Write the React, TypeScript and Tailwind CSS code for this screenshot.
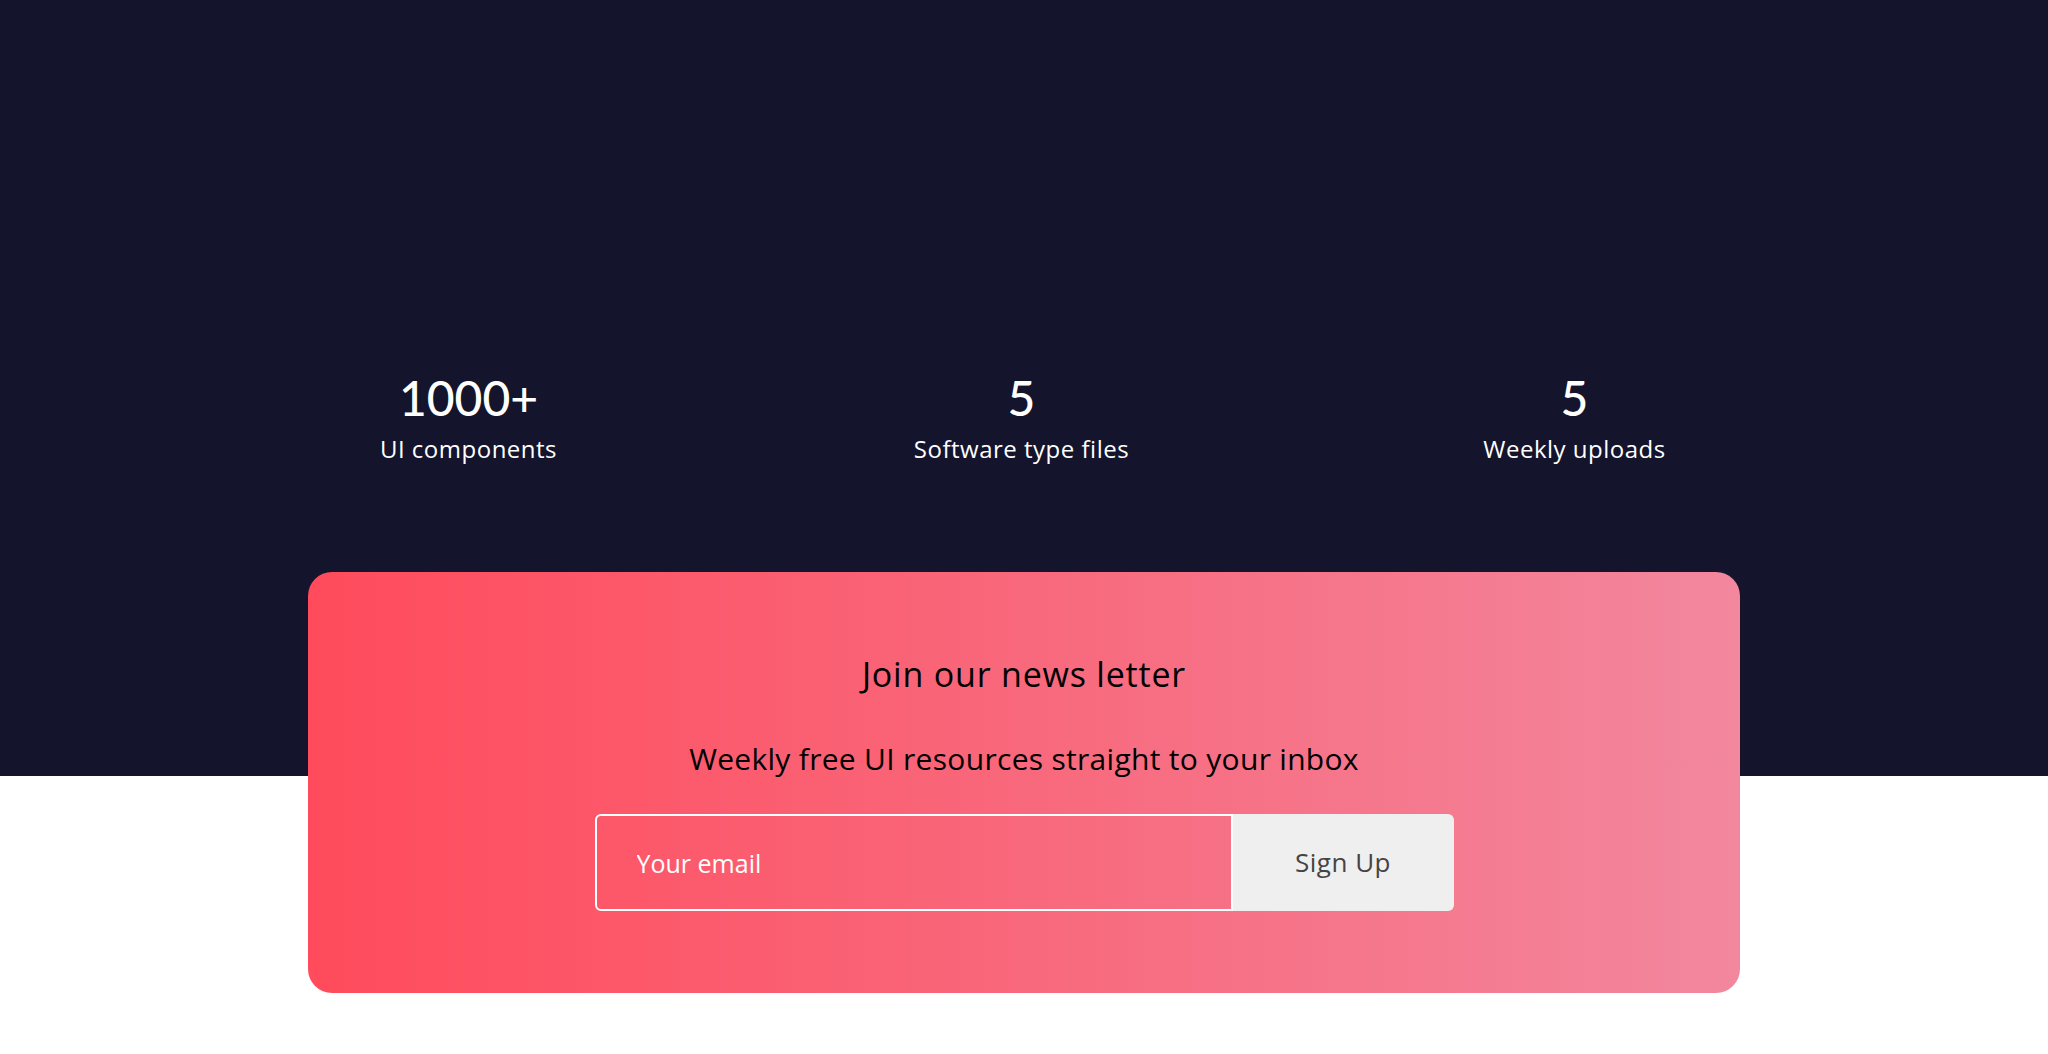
import React from "react";

const stats = [
  { value: "1000+", label: "UI components" },
  { value: "5", label: "Software type files" },
  { value: "5", label: "Weekly uploads" },
];

export default function App() {
  return (
    <div
      className="w-full h-[1054px] overflow-hidden bg-[linear-gradient(to_bottom,#14142d_776px,#ffffff_776px)] text-white"
      style={{ fontFamily: "'Open Sans', 'Noto Sans', sans-serif" }}
    >
      <div className="grid grid-cols-3 pl-[192px] pr-[197px] pt-[374px]">
        {stats.map((s, i) => (
          <div key={i} className="flex flex-col items-center text-center">
            <div
              className="text-[48px] leading-[48px] font-medium"
              style={{ fontFamily: "Lato, 'Open Sans', sans-serif" }}
            >
              {s.value}
            </div>
            <div className="mt-[15px] text-[24px] leading-[24px] tracking-[0.5px]">{s.label}</div>
          </div>
        ))}
      </div>

      <div className="mx-auto mt-[111px] w-[1432px] h-[421px] rounded-[24px] bg-[linear-gradient(90deg,#ff4b5c_0%,#fa6275_40%,#f2879e_100%)] pt-[85px] flex flex-col items-center text-black">
        <h2 className="text-[34px] leading-[34px] font-normal tracking-[0.8px]">Join our news letter</h2>
        <p className="mt-[53px] text-[30px] leading-[30px] tracking-[0.3px]">
          Weekly free UI resources straight to your inbox
        </p>
        <form className="mt-[40px] flex h-[97px] w-[859px]" onSubmit={(e) => e.preventDefault()}>
          <input
            type="email"
            placeholder="Your email"
            className="h-full w-[638px] rounded-l-[6px] border-2 border-white bg-transparent pl-[40px] text-[25px] text-white placeholder:text-white outline-none"
          />
          <button
            type="submit"
            className="h-full flex-1 rounded-r-[6px] bg-[#efefef] text-[26px] tracking-[0.5px] text-[#444444]"
          >
            Sign Up
          </button>
        </form>
      </div>
    </div>
  );
}
